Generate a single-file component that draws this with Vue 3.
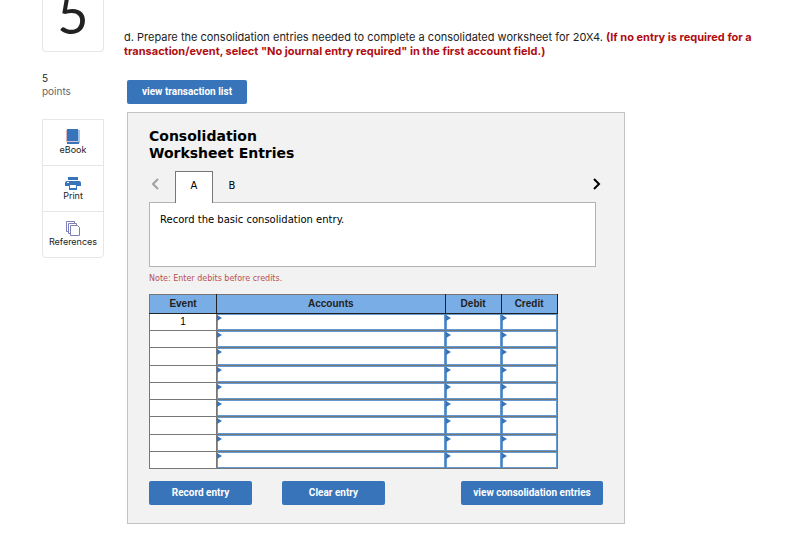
<script setup>
import { ref } from 'vue'

const columns = [
  { key: 'account', label: 'Accounts' },
  { key: 'debit', label: 'Debit' },
  { key: 'credit', label: 'Credit' },
]
const blankRows = () =>
  Array.from({ length: 9 }, (_, i) => ({
    event: i === 0 ? '1' : '',
    account: '',
    debit: '',
    credit: '',
  }))
const rows = ref(blankRows())
const tabs = ['A', 'B']
const active = ref('A')
const clearEntry = () => {
  rows.value = blankRows()
}
</script>

<template>
  <div class="page">
    <aside class="side">
      <div class="number">5</div>
      <div class="points"><span class="value">5</span><span class="unit">points</span></div>
      <nav class="tools">
        <a href="#ebook" class="tool">
          <svg width="14" height="15" viewBox="0 0 14 15" aria-hidden="true">
            <path d="M1 0h11v12H1z" fill="#3874ba" />
            <path d="M.5 1v12M13.500 1v13" stroke="#dfb3c3" />
            <path d="M12.500 1v13" stroke="#9cc4ea" />
            <path d="M1 12.500h11" stroke="#d9c5d6" />
            <path d="M1 14h12" stroke="#3874ba" stroke-width="2" />
          </svg>
          <span>eBook</span>
        </a>
        <a href="#print" class="tool">
          <svg width="16" height="13" viewBox="0 0 16 13" aria-hidden="true">
            <path d="M3 0h10v3H3z" fill="#3874ba" />
            <path d="M2 4h12a2 2 0 0 1 2 2v3H0V6a2 2 0 0 1 2-2z" fill="#3874ba" />
            <path d="M4 8h8v5H4z" fill="#3874ba" />
            <path d="M5 8h6v3H5z" fill="#fff" />
            <path d="M2 5h2v1H2z" fill="#fff" />
          </svg>
          <span>Print</span>
        </a>
        <a href="#references" class="tool">
          <svg width="14" height="15" viewBox="0 0 14 15" fill="#fff" stroke="#7c7fba" aria-hidden="true">
            <path d="M.5.500h8v10h-8z" />
            <path d="M2.500 2.500h8v10h-8z" />
            <path d="M4.500 4.500h7l2 2v8h-9z" />
          </svg>
          <span>References</span>
        </a>
      </nav>
    </aside>

    <main class="main">
      <p class="question">
        d. Prepare the consolidation entries needed to complete a consolidated worksheet for 20X4.
        <strong>(If no entry is required for a transaction/event, select "No journal entry required" in the first account field.)</strong>
      </p>
      <button type="button" class="btn list-btn">view transaction list</button>

      <section class="panel">
        <h1>Consolidation<br />Worksheet Entries</h1>
        <div class="tab-bar">
          <button type="button" class="arrow prev" aria-label="Previous entry">
            <svg width="8" height="12" viewBox="0 0 8 12" fill="none" stroke="currentColor" stroke-width="2" aria-hidden="true"><path d="M7 1 2 6l5 5" /></svg>
          </button>
          <div class="tabs">
            <button
              v-for="tab in tabs"
              :key="tab"
              type="button"
              class="tab"
              :class="{ active: active === tab }"
              @click="active = tab"
            >{{ tab }}</button>
          </div>
          <button type="button" class="arrow next" aria-label="Next entry">
            <svg width="8" height="12" viewBox="0 0 8 12" fill="none" stroke="currentColor" stroke-width="2" aria-hidden="true"><path d="m1 1 5 5-5 5" /></svg>
          </button>
        </div>
        <div class="task">Record the basic consolidation entry.</div>
        <p class="note">Note: Enter debits before credits.</p>

        <table class="journal">
          <colgroup>
            <col class="c-event" />
            <col />
            <col class="c-amount" />
            <col class="c-amount" />
          </colgroup>
          <thead>
            <tr>
              <th scope="col">Event</th>
              <th v-for="c in columns" :key="c.key" scope="col">{{ c.label }}</th>
            </tr>
          </thead>
          <tbody>
            <tr v-for="(row, i) in rows" :key="i">
              <td>{{ row.event }}</td>
              <td v-for="c in columns" :key="c.key" class="entry">
                <input v-model="row[c.key]" type="text" :aria-label="`${c.label}, row ${i + 1}`" />
              </td>
            </tr>
          </tbody>
        </table>

        <div class="actions">
          <button type="button" class="btn">Record entry</button>
          <button type="button" class="btn" @click="clearEntry">Clear entry</button>
          <button type="button" class="btn view">view consolidation entries</button>
        </div>
      </section>
    </main>
  </div>
</template>

<style>
body {
  margin: 0;
  background: #fff;
}
</style>

<style scoped>
* {
  box-sizing: border-box;
}
.page {
  display: flex;
  gap: 20px;
  padding: 0 32px 24px 42px;
  font-family: Inter, sans-serif;
  color: #222;
}
.side {
  flex: 0 0 62px;
}
.number {
  height: 52px;
  border: 1px solid #e6e6e6;
  border-top: 0;
  border-radius: 0 0 4px 4px;
  font: 54px/28px Lato, sans-serif;
  text-align: center;
}
.points {
  display: flex;
  flex-direction: column;
  margin-top: 20px;
  font-size: 10px;
  line-height: 13px;
}
.value {
  color: #222;
}
.unit {
  color: #666;
}
.tools {
  margin-top: 21px;
  border: 1px solid #e6e6e6;
  border-radius: 0 0 4px 4px;
}
.tool {
  display: flex;
  flex-direction: column;
  align-items: center;
  justify-content: flex-end;
  height: 46px;
  padding-bottom: 9px;
  font-size: 9px;
  line-height: 12px;
  color: #222;
  text-decoration: none;
}
.tool:first-child {
  height: 45px;
}
.tool + .tool {
  border-top: 1px solid #e6e6e6;
}
.main {
  flex: 1;
  min-width: 0;
}
.question {
  margin: 30px 0 22px;
  font-size: 11px;
  line-height: 14px;
}
.question strong {
  color: #b00d12;
}
.btn {
  height: 24px;
  padding: 0;
  border: 0;
  border-radius: 2px;
  background: #3874ba;
  color: #fff;
  font: bold 10px/24px Roboto, sans-serif;
}
.list-btn {
  display: block;
  width: 120px;
  margin-left: 3px;
}
.panel {
  max-width: 498px;
  margin: 8px 0 0 3px;
  padding: 15px 21px 18px;
  border: 1px solid #c3c3c3;
  background: #f2f2f2;
  color: #000;
}
h1 {
  margin: 0;
  font: bold 14px/17px "DejaVu Sans", sans-serif;
}
.tab-bar {
  position: relative;
  display: flex;
  align-items: flex-end;
  margin-top: 9px;
  margin-bottom: -1px;
}
.arrow {
  display: flex;
  align-items: center;
  height: 24px;
  margin-bottom: 7px;
  padding: 0;
  border: 0;
  background: none;
}
.prev {
  width: 26px;
  padding-left: 2px;
  color: #a0a0a0;
}
.next {
  margin-left: auto;
  margin-right: 2px;
  color: #000;
}
.tabs {
  display: flex;
}
.tab {
  width: 38px;
  height: 32px;
  padding: 0 0 4px;
  border: 1px solid transparent;
  border-bottom: 0;
  background: none;
  font: 10px/16px "DejaVu Sans", sans-serif;
  color: #000;
}
.tab.active {
  border-color: #777;
  background: #fff;
}
.task {
  height: 65px;
  margin-right: 7px;
  padding: 9px 10px;
  border: 1px solid #b3b3b3;
  background: #fff;
  font: 10px/16px "DejaVu Sans", sans-serif;
}
.note {
  margin: 5px 0 9px;
  font: 8px/13px "DejaVu Sans", sans-serif;
  color: #b85050;
}
.journal {
  width: 90%;
  height: 175px;
  border-collapse: collapse;
  table-layout: fixed;
  border: 1px solid #777;
  background: #fff;
  font: 10px/14px "Liberation Sans", sans-serif;
}
.c-event {
  width: 67px;
}
.c-amount {
  width: 56px;
}
th {
  height: 19px;
  padding: 0;
  border: 1px solid #222;
  border-top-color: #777;
  background: #79ade6;
  color: #222;
}
th:first-child {
  border-left-color: #777;
}
td {
  height: 17px;
  padding: 0;
  border: 1px solid #777;
  text-align: center;
}
.entry {
  position: relative;
}
.entry::before {
  content: "";
  position: absolute;
  top: 1px;
  left: 0;
  border: 3px solid transparent;
  border-left: 5px solid #3874ba;
  border-right: 0;
}
.entry input {
  display: block;
  width: 100%;
  height: 100%;
  min-height: 16px;
  padding: 0 6px;
  border: 1px solid #659ad0;
  border-radius: 0;
  background: #fff;
  font: inherit;
}
.actions {
  display: flex;
  gap: 30px;
  margin-top: 12px;
}
.actions .btn {
  width: 103px;
}
.actions .view {
  width: 142px;
  margin-left: auto;
}
</style>
